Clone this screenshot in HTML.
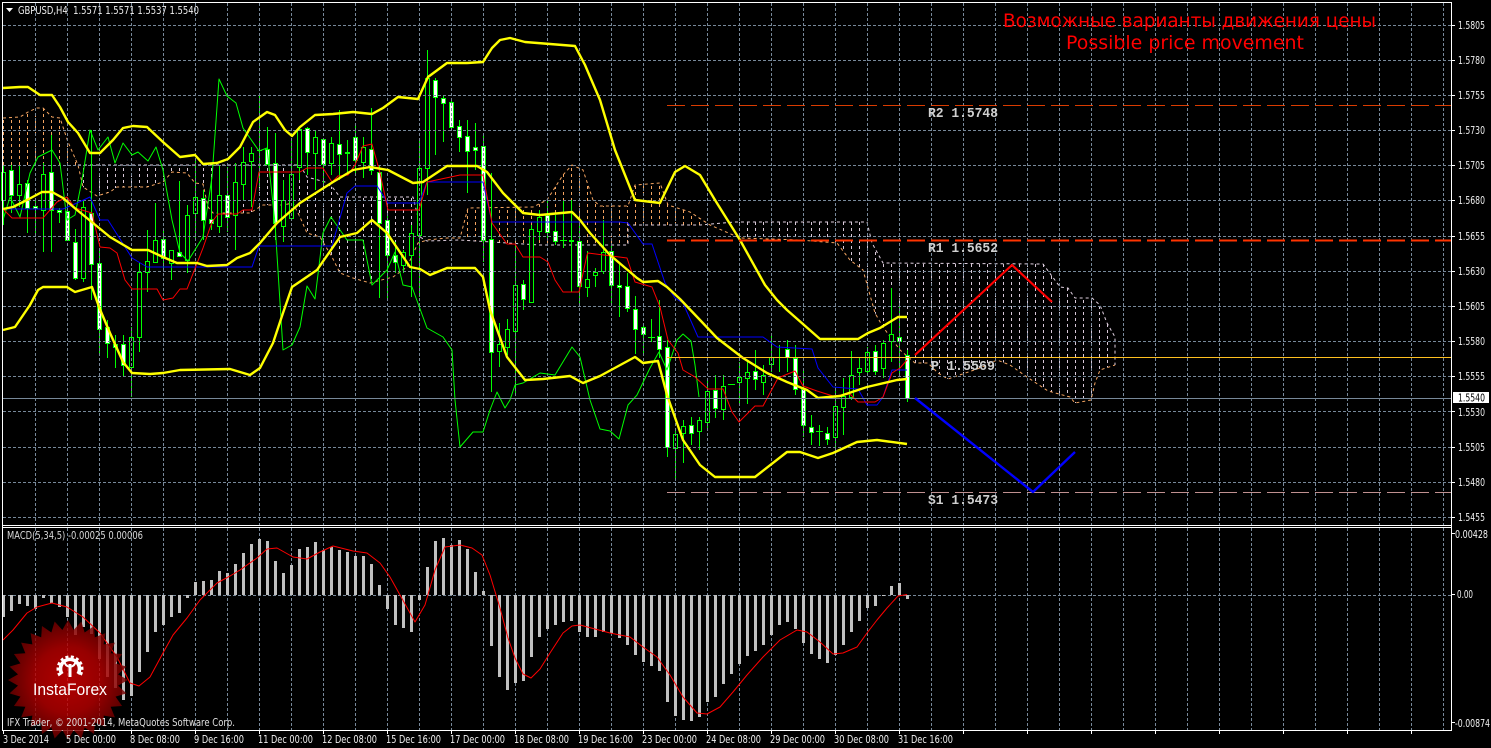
<!DOCTYPE html>
<html><head><meta charset="utf-8"><title>GBPUSD,H4</title>
<style>
html,body{margin:0;padding:0;background:#000;width:1491px;height:748px;overflow:hidden}
svg{display:block}
text{font-family:"DejaVu Sans","Liberation Sans",sans-serif;font-size:11px;fill:#f0f0f0}
.m{font-family:"Liberation Mono",monospace;font-size:14px;font-weight:bold;fill:#d0d0d0}
.l{fill:none;stroke-linejoin:round}
.y{stroke:#ffff00;stroke-width:2.4}
</style></head><body>
<svg width="1491" height="748" viewBox="0 0 1491 748" xmlns="http://www.w3.org/2000/svg">
<defs>
<pattern id="ht" patternUnits="userSpaceOnUse" width="8" height="6"><rect x="3" y="0" width="1" height="3" fill="#d8c8d8"/></pattern>
<pattern id="hp" patternUnits="userSpaceOnUse" width="8" height="6"><rect x="3" y="0" width="1" height="3" fill="#f4a460"/></pattern>
<radialGradient id="rg" gradientUnits="userSpaceOnUse" cx="68" cy="680" r="60"><stop offset="0" stop-color="#d80000"/><stop offset=".55" stop-color="#b80000"/><stop offset="1" stop-color="#6e0000"/></radialGradient>
<polygon id="sq" points="8,680 68,646 128,680 68,714" fill="url(#rg)"/>
</defs>
<rect width="1491" height="748" fill="#000"/>

<!-- cloud hatch -->
<g shape-rendering="crispEdges">
<path fill="url(#hp)" d="M3 118L20 117 28 112 37 108 43 108 52 117 60 118 68 142 78 165H3Z"/>
<path fill="url(#ht)" d="M78 165H300L307 177 325 182 333 188 340 197H413L418 217 420 237 427 240 418 243 407 267 393 277 370 283 353 278 340 273 332 257 320 237 307 233 300 217 293 203 283 205H263L250 213H213L208 207 203 184 195 183 187 173 172 172 163 182 147 187H117L110 192 97 196 83 187Z"/>
<path fill="url(#hp)" d="M460 238L468 208H533L547 200 563 175 572 165 583 170 593 200 600 206H628L635 185 660 183 668 205 690 212 708 225H635L628 225V245H540L460 240Z"/>
<path fill="url(#ht)" d="M740 238L735 222H867L872 243 883 263H1043L1060 287 1068 288 1075 298H1092L1100 305 1107 323 1115 337V365L1100 370 1095 383 1091 400 1075 403 1070 397 1048 391 1027 377 1010 365 997 360 980 368 948 379 938 373 928 363 915 363 900 350 883 327 875 313 863 270 850 260 837 243 823 238 800 237Z"/>
</g>
<!-- cloud borders -->
<g class="l" stroke-width="1" stroke-dasharray="3 3">
<path stroke="#f4a460" d="M3 118L20 117 28 112 37 108 43 108 52 117 60 118 68 142 78 165 83 187 97 196 110 192 117 187 147 187 163 182 172 172 187 173 195 183 203 184 208 207 213 213 250 213 263 205 283 205 293 203 300 217 307 233 320 237 332 257 340 273 353 278 370 283 393 277 407 267 418 243 427 240 447 238 460 238 468 208 533 207 547 200 563 175 572 165 583 170 593 200 600 206 628 206 635 185 660 183 668 205 690 212 710 225 740 238 800 240 837 243 850 260 863 270 875 313 883 327 900 350 915 363 928 363 938 373 948 379 980 368 997 360 1010 365 1027 377 1048 391 1070 397 1075 403 1091 400 1095 383 1100 370 1115 365"/>
<path stroke="#e0d0e0" d="M78 165H300L307 177 325 182 333 188 340 197H413L418 217 420 237 427 241 460 240 540 245 628 245 628 225 700 225 735 222 867 222 872 243 883 263 1043 264 1060 287 1068 288 1075 298 1092 298 1100 305 1107 323 1115 337 1115 365"/>
</g>

<!-- wicks -->
<path shape-rendering="crispEdges" fill="none" stroke="#00ff00" stroke-width="1" d="M3.5 165V225M11.5 165V213M19.5 166V207M27.5 180V233M35.5 200V233M43.5 163V252M51.5 135V252M59.5 208V223M67.5 197V240M75.5 229V280M83.5 200V282M91.5 130V300M99.5 250V355M107.5 320V358M115.5 335V368M123.5 335V377M131.5 327V397M139.5 263V352M147.5 230V292M155.5 203V263M163.5 229V268M171.5 250V280M179.5 181V257M187.5 205V273M195.5 158V240M203.5 190V240M211.5 177V230M219.5 165V233M227.5 167V232M235.5 163V250M243.5 147V200M251.5 147V207M259.5 93V187M267.5 127V165M275.5 133V240M283.5 180V242M291.5 140V220M299.5 127V180M307.5 127V175M315.5 130V190M323.5 138V183M331.5 137V175M339.5 110V180M347.5 140V175M355.5 123V175M363.5 137V178M371.5 108V175M379.5 165V298M387.5 215V300M395.5 242V273M403.5 250V273M411.5 225V297M419.5 140V297M427.5 50V195M435.5 78V155M443.5 95V142M451.5 100V127M459.5 120V152M467.5 120V193M475.5 123V170M483.5 133V262M491.5 173V392M499.5 323V367M507.5 319V355M515.5 245V393M523.5 280V310M531.5 225V303M539.5 210V240M547.5 200V240M555.5 215V245M563.5 200V248M571.5 200V292M579.5 223V306M587.5 251V297M595.5 268V287M603.5 220V274M611.5 243V305M619.5 264V317M627.5 273V312M635.5 296V354M643.5 325V354M651.5 319V342M659.5 300V358M667.5 340V457M675.5 430V478M683.5 420V463M691.5 417V445M699.5 417V450M707.5 380V431M715.5 375V418M723.5 375V420M739.5 362V405M747.5 362V404M755.5 350V390M763.5 365V395M771.5 335V372M779.5 345V372M787.5 340V372M795.5 345V395M803.5 370V437M811.5 415V445M819.5 425V446M827.5 427V445M835.5 387V452M843.5 378V435M851.5 351V400M859.5 358V385M867.5 347V375M875.5 345V375M883.5 340V378M891.5 288V362M899.5 305V375M907.5 350V402"/>
<!-- hollow bodies -->
<path shape-rendering="crispEdges" fill="#000" stroke="#00ff00" stroke-width="1" d="M1.5 172.5h4v28h-4zM17.5 184.5h4v11h-4zM41.5 174.5h4v36h-4zM81.5 207.5h4v71h-4zM129.5 337.5h4v30h-4zM137.5 272.5h4v65h-4zM145.5 261.5h4v11h-4zM153.5 240.5h4v22h-4zM169.5 250.5h4v13h-4zM185.5 215.5h4v45h-4zM193.5 197.5h4v16h-4zM217.5 195.5h4v31h-4zM233.5 182.5h4v33h-4zM241.5 162.5h4v22h-4zM249.5 153.5h4v8h-4zM281.5 200.5h4v26h-4zM289.5 174.5h4v44h-4zM297.5 129.5h4v38h-4zM313.5 137.5h4v16h-4zM329.5 143.5h4v20h-4zM361.5 147.5h4v15h-4zM401.5 252.5h4v13h-4zM409.5 233.5h4v22h-4zM417.5 168.5h4v67h-4zM425.5 78.5h4v90h-4zM497.5 344.5h4v7h-4zM505.5 329.5h4v18h-4zM513.5 285.5h4v46h-4zM529.5 229.5h4v73h-4zM537.5 217.5h4v14h-4zM585.5 279.5h4v8h-4zM593.5 272.5h4v3h-4zM601.5 252.5h4v19h-4zM673.5 434.5h4v14h-4zM681.5 426.5h4v7h-4zM697.5 420.5h4v11h-4zM705.5 391.5h4v31h-4zM721.5 386.5h4v23h-4zM737.5 377.5h4v5h-4zM745.5 372.5h4v6h-4zM761.5 375.5h4v7h-4zM769.5 357.5h4v7h-4zM833.5 406.5h4v31h-4zM841.5 396.5h4v11h-4zM849.5 375.5h4v22h-4zM857.5 368.5h4v4h-4zM865.5 352.5h4v19h-4zM881.5 343.5h4v25h-4zM889.5 334.5h4v7h-4zM257 150.5h5M560 240.5h7M648 337.5h7M816 431.5h7M728 384.5h7"/>
<!-- white bodies -->
<path shape-rendering="crispEdges" fill="#fff" stroke="#00ff00" stroke-width="1" d="M9.5 170.5h4v25h-4zM25.5 183.5h4v25h-4zM33.5 206.5h4v2h-4zM49.5 172.5h4v38h-4zM57.5 210.5h4v2h-4zM65.5 211.5h4v29h-4zM73.5 242.5h4v36h-4zM89.5 213.5h4v51h-4zM97.5 263.5h4v66h-4zM105.5 327.5h4v16h-4zM113.5 344.5h4v3h-4zM121.5 344.5h4v21h-4zM161.5 239.5h4v19h-4zM177.5 252.5h4v4h-4zM201.5 198.5h4v22h-4zM209.5 219.5h4v4h-4zM225.5 195.5h4v22h-4zM265.5 149.5h4v15h-4zM273.5 163.5h4v60h-4zM305.5 128.5h4v24h-4zM321.5 139.5h4v25h-4zM337.5 144.5h4v10h-4zM345.5 152.5h4v1h-4zM353.5 137.5h4v23h-4zM369.5 149.5h4v21h-4zM377.5 172.5h4v51h-4zM385.5 220.5h4v35h-4zM393.5 255.5h4v7h-4zM433.5 80.5h4v17h-4zM441.5 98.5h4v5h-4zM449.5 102.5h4v25h-4zM457.5 126.5h4v11h-4zM465.5 136.5h4v15h-4zM473.5 147.5h4v3h-4zM481.5 146.5h4v94h-4zM489.5 239.5h4v113h-4zM521.5 284.5h4v15h-4zM545.5 215.5h4v17h-4zM553.5 231.5h4v10h-4zM569.5 240.5h4v1h-4zM577.5 241.5h4v45h-4zM609.5 251.5h4v34h-4zM617.5 285.5h4v2h-4zM625.5 286.5h4v22h-4zM633.5 309.5h4v20h-4zM641.5 327.5h4v7h-4zM657.5 336.5h4v13h-4zM665.5 347.5h4v100h-4zM689.5 425.5h4v8h-4zM713.5 390.5h4v18h-4zM753.5 371.5h4v8h-4zM785.5 349.5h4v8h-4zM793.5 358.5h4v31h-4zM801.5 389.5h4v36h-4zM809.5 427.5h4v5h-4zM825.5 433.5h4v6h-4zM873.5 351.5h4v20h-4zM897.5 337.5h4v4h-4zM905.5 355.5h4v43h-4z"/>

<!-- grid -->
<g shape-rendering="crispEdges" fill="none" stroke="#778899" stroke-width="1" stroke-dasharray="3 2">
<path d="M3 25.5H1451M3 60.5H1451M3 95.5H1451M3 130.5H1451M3 165.5H1451M3 200.5H1451M3 236.5H1451M3 271.5H1451M3 306.5H1451M3 341.5H1451M3 376.5H1451M3 411.5H1451M3 447.5H1451M3 482.5H1451M3 517.5H1451"/>
<path d="M35.5 3V525M67.5 3V525M99.5 3V525M131.5 3V525M163.5 3V525M195.5 3V525M227.5 3V525M259.5 3V525M291.5 3V525M323.5 3V525M355.5 3V525M387.5 3V525M419.5 3V525M451.5 3V525M483.5 3V525M515.5 3V525M547.5 3V525M579.5 3V525M611.5 3V525M643.5 3V525M675.5 3V525M707.5 3V525M739.5 3V525M771.5 3V525M803.5 3V525M835.5 3V525M867.5 3V525M899.5 3V525M931.5 3V525M963.5 3V525M995.5 3V525M1027.5 3V525M1059.5 3V525M1091.5 3V525M1123.5 3V525M1155.5 3V525M1187.5 3V525M1219.5 3V525M1251.5 3V525M1283.5 3V525M1315.5 3V525M1347.5 3V525M1379.5 3V525M1411.5 3V525M1443.5 3V525"/>
<path d="M35.5 528V730M67.5 528V730M99.5 528V730M131.5 528V730M163.5 528V730M195.5 528V730M227.5 528V730M259.5 528V730M291.5 528V730M323.5 528V730M355.5 528V730M387.5 528V730M419.5 528V730M451.5 528V730M483.5 528V730M515.5 528V730M547.5 528V730M579.5 528V730M611.5 528V730M643.5 528V730M675.5 528V730M707.5 528V730M739.5 528V730M771.5 528V730M803.5 528V730M835.5 528V730M867.5 528V730M899.5 528V730M931.5 528V730M963.5 528V730M995.5 528V730M1027.5 528V730M1059.5 528V730M1091.5 528V730M1123.5 528V730M1155.5 528V730M1187.5 528V730M1219.5 528V730M1251.5 528V730M1283.5 528V730M1315.5 528V730M1347.5 528V730M1379.5 528V730M1411.5 528V730M1443.5 528V730"/>
<path d="M3 595.5H1451"/>
</g>

<!-- chikou -->
<polyline class="l" stroke="#00ff00" stroke-width="1" points="3,220 10,197 20,217 30,173 38,157 52,150 60,163 67,220 75,215 82,180 90,130 98,150 108,137 115,163 123,143 132,155 138,152 148,161 156,147 163,170 172,220 180,253 188,261 203,237 212,177 219,79 227,96 236,103 243,128 259,151 267,148 275,223 283,350 292,345 300,327 307,286 315,299 323,233 331,217 347,240 363,240 372,285 387,270 395,252 403,285 412,287 427,328 443,337 452,350 455,400 460,447 473,432 483,432 490,410 497,392 505,408 510,400 515,385 523,383 540,373 555,375 572,347 580,357 590,400 600,429 610,431 619,439 628,405 637,395 650,368 659,352 667,370 677,340 683,334 691,341 695,365 699,397"/>
<!-- kijun -->
<polyline class="l" stroke="#0000ff" stroke-width="1" points="3,209 63,209 77,203 90,197 100,220 108,220 132,258 147,267 252,267 259,246 332,246 347,193 355,186 377,186 388,203 419,203 427,182 483,182 492,222 620,222 628,223 643,244 652,244 665,283 675,298 683,303 698,337 763,337 777,347 812,349 818,368 833,387 858,389 867,405 877,405 883,397 892,370 907,370"/>
<!-- tenkan -->
<polyline class="l" stroke="#ff0000" stroke-width="1" points="3,209 12,218 43,218 57,202 67,197 75,208 92,213 100,247 110,248 117,253 125,280 132,289 157,289 163,300 173,298 180,289 187,289 203,248 212,222 218,214 237,214 243,210 252,210 259,172 300,172 307,168 323,168 332,182 338,176 348,175 355,165 363,146 372,144 380,173 388,210 419,210 427,182 460,175 483,175 492,223 507,244 515,244 523,257 540,257 548,262 555,280 563,292 579,292 587,255 588,253 627,258 635,282 652,287 660,307 668,340 678,353 683,370 695,377 708,389 723,389 732,412 739,422 755,406 763,406 778,378 795,371 803,386 817,391 833,396 850,394 858,402 875,402 883,397 892,373 900,368 907,360"/>
<!-- bollinger -->
<polyline class="l y" points="3,88 20,87 28,87 40,95 52,95 60,107 68,122 78,133 90,153 100,153 113,140 123,128 133,126 147,127 163,142 180,157 195,155 203,164 217,163 228,159 240,147 253,122 267,112 275,115 285,130 292,136 300,127 315,115 333,114 353,112 372,114 383,108 398,97 418,99 428,77 447,63 467,63 483,62 492,48 500,40 510,38 525,42 575,46 585,65 600,100 615,150 635,200 660,203 675,172 685,166 700,175 715,200 740,240 765,285 777,300 787,310 820,339 858,339 868,333 880,328 898,317 907,317"/>
<polyline class="l y" points="3,209 13,207 27,200 42,192 52,192 63,198 77,210 93,223 110,237 132,250 148,250 163,257 177,263 197,263 207,266 227,265 237,258 250,253 260,243 277,223 300,203 333,182 353,170 370,167 388,170 413,183 423,182 447,166 477,166 487,172 503,193 523,213 540,215 572,212 580,220 590,233 610,255 630,272 637,278 643,282 658,281 667,287 680,299 700,320 717,338 743,358 767,373 787,382 807,390 818,398 840,396 867,387 897,380 907,379"/>
<polyline class="l y" points="3,330 15,327 30,305 38,290 43,287 67,287 75,292 92,287 99,307 110,333 123,362 132,373 150,374 163,373 180,370 230,369 250,375 260,368 273,343 283,313 292,287 317,270 340,237 357,233 372,220 387,233 410,267 420,269 430,275 447,268 475,268 483,277 490,310 507,357 525,380 543,379 570,376 583,383 600,376 635,357 643,363 658,361 667,395 683,440 700,465 715,477 755,477 787,452 800,452 818,458 833,453 857,442 877,440 907,444"/>

<!-- levels -->
<g shape-rendering="crispEdges" fill="none" stroke-width="1">
<path stroke="#ff4500" stroke-dasharray="18 6" d="M667 105.5H1451" opacity=".85"/>
<path stroke="#ff3300" stroke-width="2" stroke-dasharray="18 6" d="M667 240.5H1451"/>
<path stroke="#ffc020" d="M667 357.5H1451"/>
<path stroke="#778899" d="M3 398.5H1451"/>
<path stroke="#c09090" stroke-dasharray="18 6" d="M667 492.5H1451"/>
</g>
<!-- forecast -->
<polyline class="l" stroke="#ff0000" stroke-width="2.2" points="915,355 1012,265 1052,302"/>
<polyline class="l" stroke="#0000ff" stroke-width="2.4" points="915,398 1033,492 1075,452"/>

<text class="m" x="928" y="117" textLength="70" lengthAdjust="spacingAndGlyphs">R2 1.5748</text>
<text class="m" x="928" y="252" textLength="70" lengthAdjust="spacingAndGlyphs">R1 1.5652</text>
<text class="m" x="931" y="370" textLength="64" lengthAdjust="spacingAndGlyphs">P 1.5569</text>
<text class="m" x="928" y="504" textLength="70" lengthAdjust="spacingAndGlyphs">S1 1.5473</text>

<text x="1003" y="27" textLength="373" lengthAdjust="spacingAndGlyphs" style="font-size:19px;fill:#ff0000">Возможные варианты движения цены</text>
<text x="1066" y="49" textLength="238" lengthAdjust="spacingAndGlyphs" style="font-size:19px;fill:#ff0000">Possible price movement</text>

<!-- macd -->
<path shape-rendering="crispEdges" fill="none" stroke="#c0c0c0" stroke-width="3" d="M3.5 595V617M11.5 595V611M19.5 595V604M27.5 595V606M35.5 595V609M43.5 595V598M51.5 595V603M59.5 595V607M67.5 595V617M75.5 595V635M83.5 595V627M91.5 595V634M99.5 595V659M107.5 595V677M115.5 595V688M123.5 595V700M131.5 595V696M139.5 595V672M147.5 595V652M155.5 595V632M163.5 595V625M171.5 595V617M179.5 595V613M187.5 595V598M195.5 595V582M203.5 595V581M211.5 595V580M219.5 595V571M227.5 595V573M235.5 595V564M243.5 595V553M251.5 595V544M259.5 595V539M267.5 595V541M275.5 595V561M283.5 595V573M291.5 595V565M299.5 595V549M307.5 595V547M315.5 595V542M323.5 595V550M331.5 595V547M339.5 595V550M347.5 595V552M355.5 595V556M363.5 595V556M371.5 595V564M379.5 595V585M387.5 595V609M395.5 595V625M403.5 595V628M411.5 595V632M419.5 595V600M427.5 595V567M435.5 595V541M443.5 595V538M451.5 595V545M459.5 595V540M467.5 595V549M475.5 595V572M483.5 595V591M491.5 595V646M499.5 595V677M507.5 595V690M515.5 595V683M523.5 595V681M531.5 595V657M539.5 595V637M547.5 595V629M555.5 595V625M563.5 595V622M571.5 595V621M579.5 595V632M587.5 595V637M595.5 595V637M603.5 595V632M611.5 595V633M619.5 595V638M627.5 595V645M635.5 595V655M643.5 595V662M651.5 595V666M659.5 595V671M667.5 595V702M675.5 595V716M683.5 595V720M691.5 595V721M699.5 595V717M707.5 595V702M715.5 595V697M723.5 595V684M731.5 595V674M739.5 595V664M747.5 595V656M755.5 595V651M763.5 595V645M771.5 595V635M779.5 595V625M787.5 595V622M795.5 595V629M803.5 595V643M811.5 595V654M819.5 595V659M827.5 595V663M835.5 595V655M843.5 595V645M851.5 595V632M859.5 595V621M867.5 595V608M875.5 595V606M883.5 595V596M891.5 595V586M899.5 595V583M907.5 595V599"/>
<polyline class="l" stroke="#ff0000" stroke-width="1" points="3,640 13,630 27,613 37,607 52,603 67,607 83,617 100,633 117,657 130,683 139,686 150,677 163,653 173,635 187,618 200,600 217,583 230,576 240,570 257,558 267,549 277,548 293,557 307,559 320,552 333,546 353,551 367,553 380,563 390,577 400,595 415,622 425,605 435,570 445,547 460,545 472,548 482,555 490,575 500,608 508,638 515,658 523,674 531,678 540,669 550,653 563,633 572,626 580,625 595,629 610,633 630,637 643,647 657,657 670,675 683,697 697,713 707,714 720,707 733,692 747,675 763,657 780,640 797,630 807,632 820,642 833,654 843,653 857,647 867,633 877,620 887,608 898,596 907,594.5"/>

<!-- frame -->
<g shape-rendering="crispEdges" fill="none" stroke="#fff" stroke-width="1">
<path d="M2.5 748V2.5H1451.5V748"/>
<path d="M2.5 525.5H1451.5M2.5 527.5H1451.5M2.5 730.5H1451.5"/>
<path d="M1452 25.5h3M1452 60.5h3M1452 95.5h3M1452 130.5h3M1452 165.5h3M1452 200.5h3M1452 236.5h3M1452 271.5h3M1452 306.5h3M1452 341.5h3M1452 376.5h3M1452 411.5h3M1452 447.5h3M1452 482.5h3M1452 517.5h3M1452 533.5h3M1452 594.5h3M1452 722.5h3"/>
<path d="M3.5 731v3M67.5 731v3M131.5 731v3M195.5 731v3M259.5 731v3M323.5 731v3M387.5 731v3M451.5 731v3M515.5 731v3M579.5 731v3M643.5 731v3M707.5 731v3M771.5 731v3M835.5 731v3M899.5 731v3M963.5 731v3M1027.5 731v3M1091.5 731v3M1155.5 731v3M1219.5 731v3M1283.5 731v3M1347.5 731v3M1411.5 731v3"/>
</g>
<rect x="0" y="731" width="3" height="17" fill="#000"/>
<rect x="1451" y="731" width="40" height="17" fill="#000"/>
<path shape-rendering="crispEdges" d="M3.5 731v3" stroke="#fff" fill="none"/>

<!-- logo -->
<g opacity=".82">
<circle cx="68" cy="680" r="50" fill="url(#rg)"/>
<use href="#sq"/>
<use href="#sq" transform="rotate(12.857 68 680)"/>
<use href="#sq" transform="rotate(25.714 68 680)"/>
<use href="#sq" transform="rotate(38.571 68 680)"/>
<use href="#sq" transform="rotate(51.429 68 680)"/>
<use href="#sq" transform="rotate(64.286 68 680)"/>
<use href="#sq" transform="rotate(77.143 68 680)"/>
<use href="#sq" transform="rotate(90 68 680)"/>
<use href="#sq" transform="rotate(102.857 68 680)"/>
<use href="#sq" transform="rotate(115.714 68 680)"/>
<use href="#sq" transform="rotate(128.571 68 680)"/>
<use href="#sq" transform="rotate(141.429 68 680)"/>
<use href="#sq" transform="rotate(154.286 68 680)"/>
<use href="#sq" transform="rotate(167.143 68 680)"/>
</g>
<g fill="none" stroke="#fff">
<path stroke-width="3.6" d="M62 674A9.5 9.5 0 1 1 78 674"/>
<path stroke-width="3" stroke-dasharray="3 2.3" d="M60 675.5A12 12 0 1 1 80 675.5"/>
<path stroke-width="3" d="M70 664V677"/>
<path stroke-width="2" d="M64.5 661.5Q65 666 70 667Q75 666 75.5 661.5"/>
</g>
<text x="33" y="695" textLength="74" lengthAdjust="spacingAndGlyphs" style="font-family:'Liberation Sans',sans-serif;font-size:17px;fill:#fff">InstaForex</text>

<!-- header -->
<path d="M6 8h7l-3.5 4z" fill="#fff"/>
<text x="18" y="14" textLength="181" lengthAdjust="spacingAndGlyphs" xml:space="preserve">GBPUSD,H4  1.5571 1.5571 1.5537 1.5540</text>
<text x="7" y="539" textLength="136" lengthAdjust="spacingAndGlyphs" style="fill:#d8d8d8">MACD(5,34,5) -0.00025 0.00006</text>
<text x="7" y="726" textLength="228" lengthAdjust="spacingAndGlyphs" style="fill:#e0e0e0">IFX Trader, © 2001-2014, MetaQuotes Software Corp.</text>

<!-- price axis -->
<g>
<text x="1458" y="29" textLength="27" lengthAdjust="spacingAndGlyphs">1.5805</text>
<text x="1458" y="64" textLength="27" lengthAdjust="spacingAndGlyphs">1.5780</text>
<text x="1458" y="99" textLength="27" lengthAdjust="spacingAndGlyphs">1.5755</text>
<text x="1458" y="134" textLength="27" lengthAdjust="spacingAndGlyphs">1.5730</text>
<text x="1458" y="169" textLength="27" lengthAdjust="spacingAndGlyphs">1.5705</text>
<text x="1458" y="204" textLength="27" lengthAdjust="spacingAndGlyphs">1.5680</text>
<text x="1458" y="240" textLength="27" lengthAdjust="spacingAndGlyphs">1.5655</text>
<text x="1458" y="275" textLength="27" lengthAdjust="spacingAndGlyphs">1.5630</text>
<text x="1458" y="310" textLength="27" lengthAdjust="spacingAndGlyphs">1.5605</text>
<text x="1458" y="345" textLength="27" lengthAdjust="spacingAndGlyphs">1.5580</text>
<text x="1458" y="380" textLength="27" lengthAdjust="spacingAndGlyphs">1.5555</text>
<text x="1458" y="416" textLength="27" lengthAdjust="spacingAndGlyphs">1.5530</text>
<text x="1458" y="451" textLength="27" lengthAdjust="spacingAndGlyphs">1.5505</text>
<text x="1458" y="486" textLength="27" lengthAdjust="spacingAndGlyphs">1.5480</text>
<text x="1458" y="521" textLength="27" lengthAdjust="spacingAndGlyphs">1.5455</text>
<rect x="1453" y="392" width="36" height="11" fill="#fff"/>
<text x="1458" y="401.5" textLength="27" lengthAdjust="spacingAndGlyphs" style="fill:#000">1.5540</text>
<text x="1455" y="538" textLength="33" lengthAdjust="spacingAndGlyphs">0.00428</text>
<text x="1457" y="598" textLength="16" lengthAdjust="spacingAndGlyphs">0.00</text>
<text x="1455" y="727" textLength="35" lengthAdjust="spacingAndGlyphs">-0.00874</text>
</g>
<!-- time axis -->
<g>
<text x="3" y="743" textLength="46" lengthAdjust="spacingAndGlyphs">3 Dec 2014</text>
<text x="66" y="743" textLength="50" lengthAdjust="spacingAndGlyphs">5 Dec 00:00</text>
<text x="130" y="743" textLength="50" lengthAdjust="spacingAndGlyphs">8 Dec 08:00</text>
<text x="194" y="743" textLength="50" lengthAdjust="spacingAndGlyphs">9 Dec 16:00</text>
<text x="258" y="743" textLength="55" lengthAdjust="spacingAndGlyphs">11 Dec 00:00</text>
<text x="322" y="743" textLength="55" lengthAdjust="spacingAndGlyphs">12 Dec 08:00</text>
<text x="386" y="743" textLength="55" lengthAdjust="spacingAndGlyphs">15 Dec 16:00</text>
<text x="450" y="743" textLength="55" lengthAdjust="spacingAndGlyphs">17 Dec 00:00</text>
<text x="514" y="743" textLength="55" lengthAdjust="spacingAndGlyphs">18 Dec 08:00</text>
<text x="578" y="743" textLength="55" lengthAdjust="spacingAndGlyphs">19 Dec 16:00</text>
<text x="642" y="743" textLength="55" lengthAdjust="spacingAndGlyphs">23 Dec 00:00</text>
<text x="706" y="743" textLength="55" lengthAdjust="spacingAndGlyphs">24 Dec 08:00</text>
<text x="770" y="743" textLength="55" lengthAdjust="spacingAndGlyphs">29 Dec 00:00</text>
<text x="834" y="743" textLength="55" lengthAdjust="spacingAndGlyphs">30 Dec 08:00</text>
<text x="898" y="743" textLength="55" lengthAdjust="spacingAndGlyphs">31 Dec 16:00</text>
</g>
</svg>
</body></html>
